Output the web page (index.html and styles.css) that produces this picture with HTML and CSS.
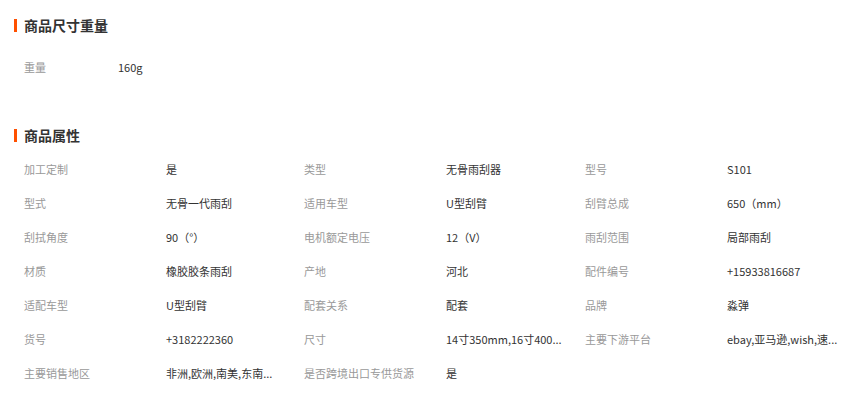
FILE: index.html
```html
<!DOCTYPE html>
<html lang="zh-CN">
<head>
<meta charset="utf-8">
<title>商品属性</title>
<link rel="stylesheet" href="styles.css">
</head>
<body>
<div class="page">
  <section class="block block-size">
    <h2 class="title">商品尺寸重量</h2>
    <div class="weight-row">
      <span class="label weight-label">重量</span>
      <span class="value">160g</span>
    </div>
  </section>

  <section class="block block-attr">
    <h2 class="title">商品属性</h2>
    <div class="attr-grid">
      <div class="cell"><span class="label">加工定制</span><span class="value">是</span></div>
      <div class="cell"><span class="label">类型</span><span class="value">无骨雨刮器</span></div>
      <div class="cell"><span class="label">型号</span><span class="value">S101</span></div>

      <div class="cell"><span class="label">型式</span><span class="value">无骨一代雨刮</span></div>
      <div class="cell"><span class="label">适用车型</span><span class="value">U型刮臂</span></div>
      <div class="cell"><span class="label">刮臂总成</span><span class="value">650（mm）</span></div>

      <div class="cell"><span class="label">刮拭角度</span><span class="value">90（°）</span></div>
      <div class="cell"><span class="label">电机额定电压</span><span class="value">12（V）</span></div>
      <div class="cell"><span class="label">雨刮范围</span><span class="value">局部雨刮</span></div>

      <div class="cell"><span class="label">材质</span><span class="value">橡胶胶条雨刮</span></div>
      <div class="cell"><span class="label">产地</span><span class="value">河北</span></div>
      <div class="cell"><span class="label">配件编号</span><span class="value">+15933816687</span></div>

      <div class="cell"><span class="label">适配车型</span><span class="value">U型刮臂</span></div>
      <div class="cell"><span class="label">配套关系</span><span class="value">配套</span></div>
      <div class="cell"><span class="label">品牌</span><span class="value">淼弹</span></div>

      <div class="cell"><span class="label">货号</span><span class="value">+3182222360</span></div>
      <div class="cell"><span class="label">尺寸</span><span class="value">14寸350mm,16寸400...</span></div>
      <div class="cell"><span class="label">主要下游平台</span><span class="value">ebay,亚马逊,wish,速...</span></div>

      <div class="cell"><span class="label">主要销售地区</span><span class="value">非洲,欧洲,南美,东南...</span></div>
      <div class="cell"><span class="label">是否跨境出口专供货源</span><span class="value">是</span></div>
    </div>
  </section>
</div>
</body>
</html>
```

FILE: styles.css
```css
html, body {
  margin: 0;
  padding: 0;
  background: #ffffff;
}

body {
  font-family: "Noto Sans CJK SC", "Noto Sans", sans-serif;
  font-size: 11px;
  color: #333333;
  width: 855px;
  height: 393px;
  overflow: hidden;
}

.page {
  padding-top: 15px;
}

.block-attr {
  margin-top: 41px;
}

.title {
  margin: 0;
  padding-left: 24px;
  position: relative;
  font-size: 14px;
  font-weight: bold;
  line-height: 20px;
  height: 20px;
  color: #333333;
}

.title::before {
  content: "";
  position: absolute;
  left: 14px;
  top: 4px;
  width: 3px;
  height: 13px;
  background: #ff5000;
}

.weight-row {
  margin-top: 15px;
  padding-left: 24px;
  height: 34px;
  display: flex;
  align-items: center;
}

.label {
  color: #999999;
  flex: none;
  white-space: nowrap;
}

.weight-label {
  width: 94px;
}

.value {
  color: #333333;
  white-space: nowrap;
}

.attr-grid {
  margin-top: 7px;
  padding-left: 24px;
  display: grid;
  grid-template-columns: 280px 281px 270px;
  grid-auto-rows: 34px;
}

.cell {
  display: flex;
  align-items: center;
  min-width: 0;
}

.cell .label {
  width: 142px;
}
```
